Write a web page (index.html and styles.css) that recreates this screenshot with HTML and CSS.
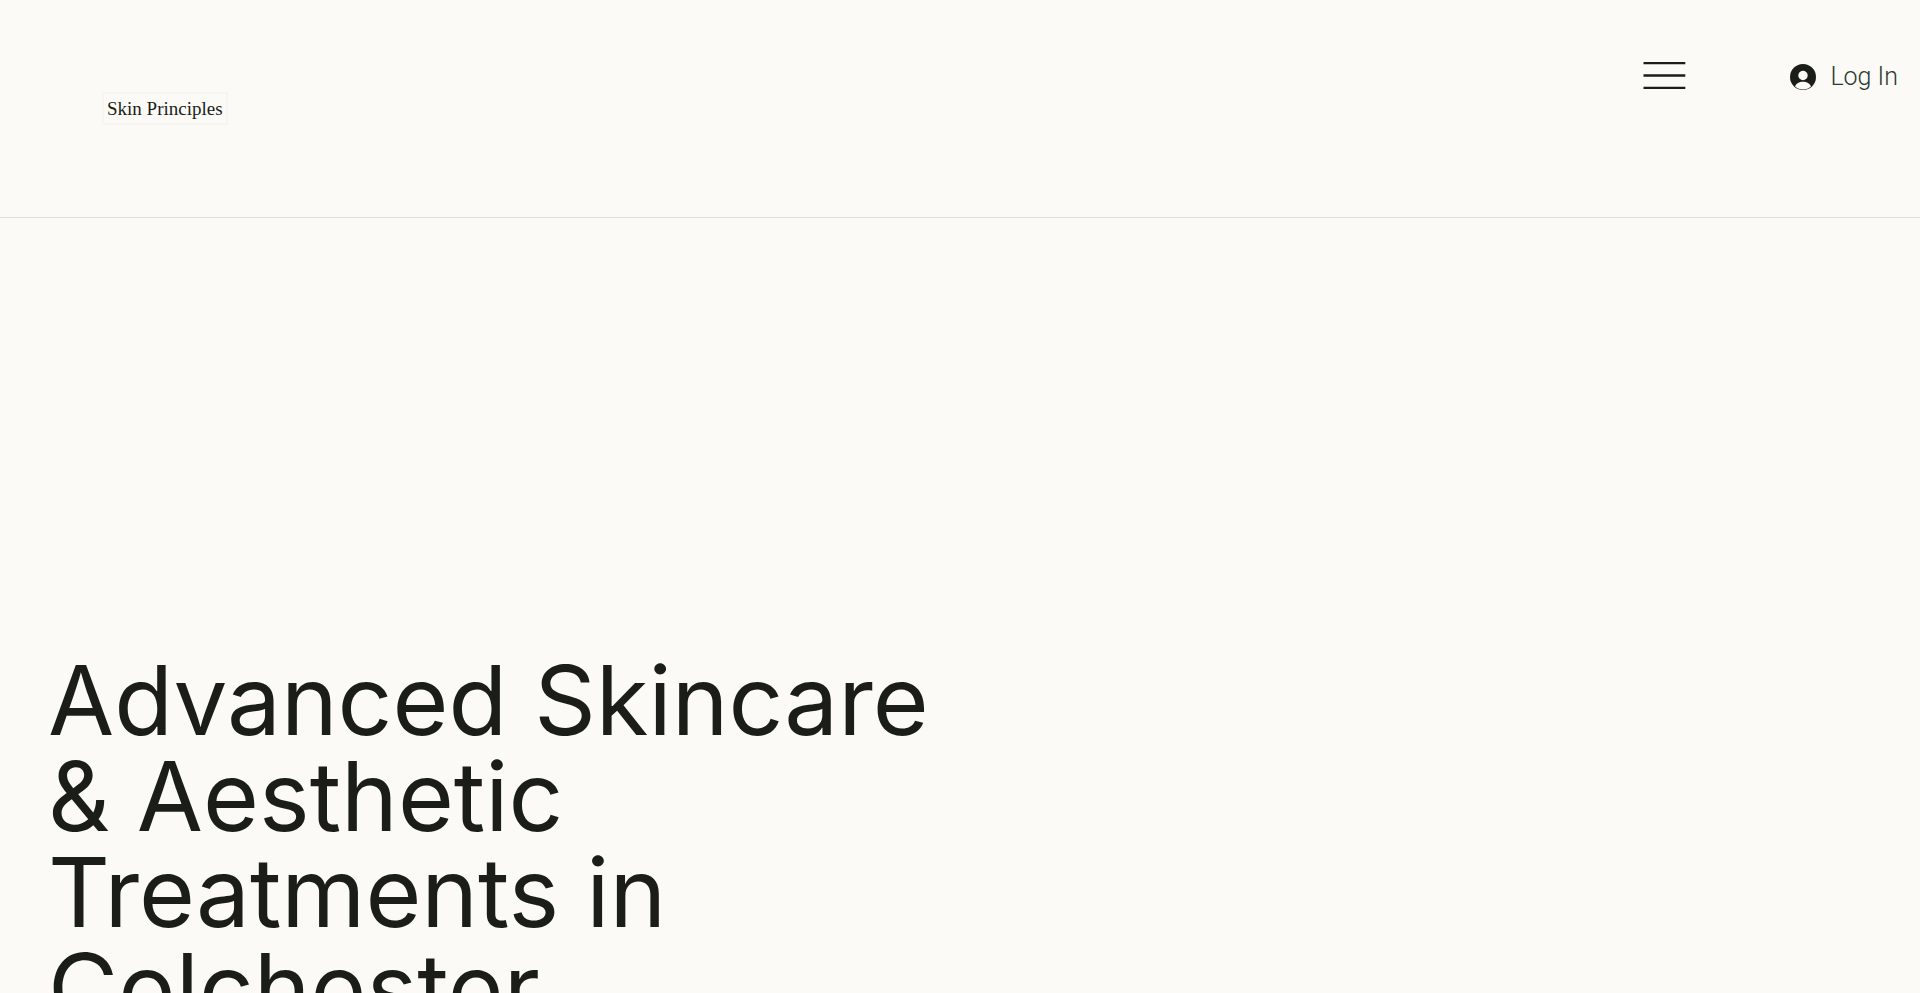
FILE: index.html
```html
<!DOCTYPE html>
<html lang="en">
<head>
<meta charset="UTF-8">
<meta name="viewport" content="width=device-width, initial-scale=1.0">
<title>Skin Principles</title>

<link rel="stylesheet" href="styles.css">

</head>
<body>
    <header class="site-header">
        <a class="logo" href="#">Skin Principles</a>
        <nav class="header-nav">
            <button class="menu-button" type="button" aria-label="Menu">
                <svg class="menu-icon" viewBox="0 0 43 27" aria-hidden="true">
                    <path d="M0.500 1.200H42.300M0.500 13.500H42.300M0.500 25.800H42.300" stroke="#1b1d18" stroke-width="2.300"/>
                </svg>
            </button>
            <button class="login-button" type="button">
                <svg class="avatar" viewBox="0 0 26 26" aria-hidden="true">
                    <circle cx="13" cy="13" r="13" fill="#1b1d18"/>
                    <circle cx="13" cy="11.5" r="4.7" fill="#fbfaf6"/>
                    <path d="M5 22.4C6 19.4 9.2 17.7 13 17.7s7 1.7 8 4.7C18.8 24.5 16 25.4 13 25.4S7.2 24.5 5 22.4z" fill="#fbfaf6"/>
                </svg>
                <span>Log In</span>
            </button>
        </nav>
    </header>

    <main class="hero">
        <h1>Advanced Skincare &amp; Aesthetic Treatments in Colchester</h1>
    </main>
</body>
</html>
```

FILE: styles.css
```css
* {
    box-sizing: border-box;
}

body {
    margin: 0;
    height: 100vh;
    overflow: hidden;
    background-color: #fbfaf6;
    color: #1b1d18;
    font-family: Inter, "Liberation Sans", sans-serif;
}

.site-header {
    display: flex;
    justify-content: space-between;
    align-items: flex-start;
    padding: 56px 22px 0 102px;
    height: 218px;
    border-bottom: 1px solid #e1e1dc;
}

.logo {
    margin-top: 36px;
    padding: 0 3px;
    border: 2px solid #f5f5f1;
    color: #1b1d18;
    font-family: "Liberation Serif", serif;
    font-size: 19px;
    line-height: 29px;
    text-decoration: none;
}

.header-nav {
    display: flex;
    align-items: flex-start;
    gap: 104px;
}

button {
    padding: 0;
    border: none;
    background: none;
    cursor: pointer;
}

.menu-button {
    padding-top: 6px;
}

.menu-icon {
    display: block;
    width: 43px;
    height: 27px;
}

.login-button {
    display: flex;
    align-items: center;
    gap: 14px;
    color: #2d3a30;
    font-family: Roboto, "Liberation Sans", sans-serif;
    font-size: 25px;
    font-weight: 300;
    line-height: 42px;
}

.avatar {
    width: 26px;
    height: 26px;
}

.hero {
    padding: 434px 48px 0;
}

h1 {
    margin: 0;
    max-width: 900px;
    font-size: 96px;
    font-weight: 400;
    line-height: 96px;
}
```
